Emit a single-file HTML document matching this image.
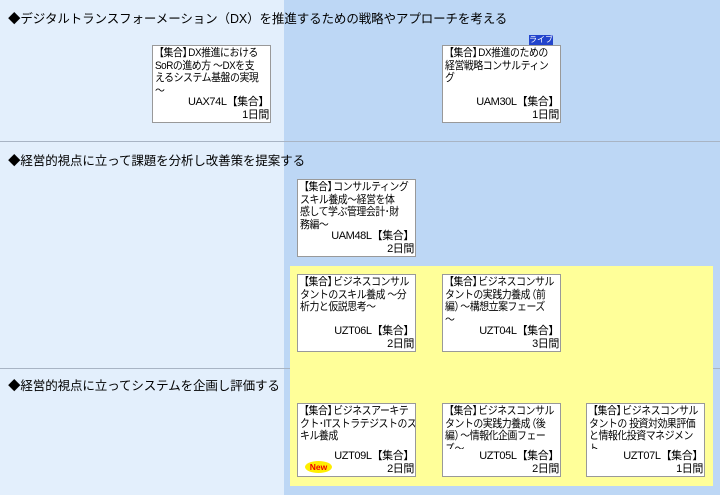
<!DOCTYPE html>
<html><head><meta charset="utf-8"><style>
body{margin:0;width:720px;height:495px;position:relative;overflow:hidden;background:#bdd7f5;font-family:"Liberation Sans","Noto Sans CJK JP",sans-serif;color:#000}
.l{position:absolute;left:0;top:0;width:284px;height:495px;background:#e3effc}
.hl{position:absolute;left:0;width:720px;height:1px;background:#a8b4c4}
.y{position:absolute;left:290px;top:266px;width:423px;height:220px;background:#ffff99}
.h{position:absolute;left:8px;font-size:12.5px;white-space:nowrap;letter-spacing:-0.1px}
.c{position:absolute;width:117px;height:76px;background:#fff;border:1px solid #999;font-size:11px;line-height:12.5px;white-space:nowrap;letter-spacing:-0.4px;overflow:hidden}
.t{position:absolute;left:2px;top:1px;width:128px;height:50px;overflow:hidden;letter-spacing:-0.5px;transform:scaleX(0.9);transform-origin:0 0}
.b{position:absolute;right:1px;bottom:0;text-align:right;line-height:13px}
.o{margin-left:-4px}.e{margin-right:-4px}
.t .o:first-child{margin-left:-1px}
.tag{position:absolute;left:529px;top:35px;width:24px;height:10px;background:#2244cc;color:#fff;font-size:8px;line-height:10px;text-align:center}
.new{position:absolute;left:7px;bottom:3px;width:27px;height:12px;border-radius:50%;background:#ffee00;color:#e00;font-size:8.5px;line-height:12px;text-align:center;font-weight:bold;letter-spacing:0}
</style></head><body>
<div class="l"></div>
<div class="hl" style="top:141px"></div>
<div class="hl" style="top:368px"></div>
<div class="y"></div>
<div class="h" style="top:8px">◆デジタルトランスフォーメーション（DX）を推進するための戦略やアプローチを考える</div>
<div class="h" style="top:150px">◆経営的視点に立って課題を分析し改善策を提案する</div>
<div class="h" style="top:375px">◆経営的視点に立ってシステムを企画し評価する</div>

<div class="c" style="left:152px;top:45px"><div class="t"><span class="o">【</span>集合<span class="e">】</span>DX推進における<br>SoRの進め方 ～DXを支<br>えるシステム基盤の実現<br>～</div><div class="b">UAX74L【集合】<br>1日間</div></div>
<div class="tag">ライブ</div>
<div class="c" style="left:442px;top:45px"><div class="t"><span class="o">【</span>集合<span class="e">】</span>DX推進のための<br>経営戦略コンサルティン<br>グ</div><div class="b">UAM30L【集合】<br>1日間</div></div>
<div class="c" style="left:297px;top:179px"><div class="t"><span class="o">【</span>集合<span class="e">】</span>コンサルティング<br>スキル養成～経営を体<br>感して学ぶ管理会計･財<br>務編～</div><div class="b">UAM48L【集合】<br>2日間</div></div>
<div class="c" style="left:297px;top:274px"><div class="t"><span class="o">【</span>集合<span class="e">】</span>ビジネスコンサル<br>タントのスキル養成 ～分<br>析力と仮説思考～</div><div class="b">UZT06L【集合】<br>2日間</div></div>
<div class="c" style="left:442px;top:274px"><div class="t"><span class="o">【</span>集合<span class="e">】</span>ビジネスコンサル<br>タントの実践力養成<span class="o">（</span>前<br>編<span class="e">）</span>～構想立案フェーズ<br>～</div><div class="b">UZT04L【集合】<br>3日間</div></div>
<div class="c" style="left:297px;top:403px;height:72px"><div class="t" style="height:46px"><span class="o">【</span>集合<span class="e">】</span>ビジネスアーキテ<br>クト･ITストラテジストのス<br>キル養成</div><div class="new">New</div><div class="b">UZT09L【集合】<br>2日間</div></div>
<div class="c" style="left:442px;top:403px;height:72px"><div class="t" style="height:44px"><span class="o">【</span>集合<span class="e">】</span>ビジネスコンサル<br>タントの実践力養成<span class="o">（</span>後<br>編<span class="e">）</span>～情報化企画フェー<br>ズ～</div><div class="b">UZT05L【集合】<br>2日間</div></div>
<div class="c" style="left:586px;top:403px;height:72px"><div class="t" style="height:44px"><span class="o">【</span>集合<span class="e">】</span>ビジネスコンサル<br>タントの 投資対効果評価<br>と情報化投資マネジメン<br>ト</div><div class="b">UZT07L【集合】<br>1日間</div></div>
</body></html>
